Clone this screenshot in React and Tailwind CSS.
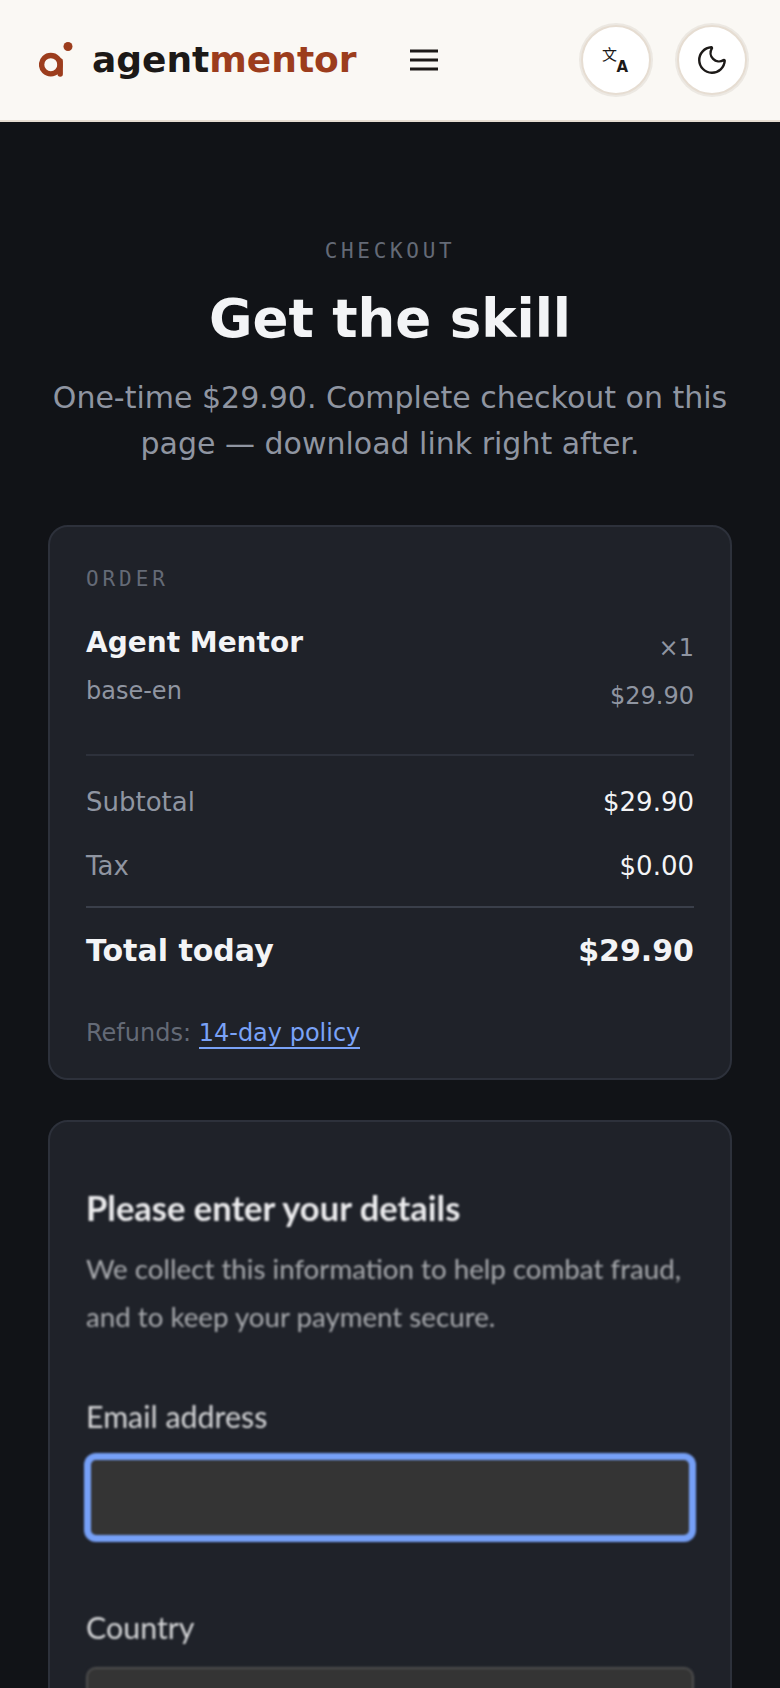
import React from 'react';
import { Moon } from 'lucide-react';

const sans = 'font-["DejaVu_Sans",sans-serif]';

function Logo() {
  return (
    <svg width="34" height="38" viewBox="0 0 34 38" className="shrink-0">
      <circle cx="29" cy="5.5" r="4.5" fill="#9c3d1d" />
      <circle cx="11.8" cy="23.7" r="9.2" fill="none" stroke="#9c3d1d" strokeWidth="5.4" />
      <path d="M21.2 20v13" stroke="#9c3d1d" strokeWidth="5.4" strokeLinecap="round" fill="none" />
    </svg>
  );
}

function Burger() {
  return (
    <svg width="28" height="28" viewBox="0 0 28 28" fill="none" stroke="#1c1917" strokeWidth="3">
      <path d="M0 5h28M0 14h28M0 23h28" />
    </svg>
  );
}

function Header() {
  return (
    <header className="h-[122px] shrink-0 flex items-center bg-[#faf8f4] border-b-2 border-[#e6ddd2] pl-[39px] pr-[33px]">
      <Logo />
      <div className="ml-[19px] text-[36px] leading-none font-bold text-[#1c1917]">
        agent<span className="text-[#9c3d1d]">mentor</span>
      </div>
      <button className="ml-[53px] w-[28px] h-[28px] flex items-center justify-center">
        <Burger />
      </button>
      <div className="ml-auto flex gap-[26px]">
        <button className="w-[70px] h-[70px] rounded-full bg-white border-2 border-[#e6ddd2] shadow-[0_0_0_2px_rgba(230,225,218,0.7)] flex items-center justify-center text-[#1c1917]">
          <span className="relative w-[28px] h-[28px] block">
            <span className='absolute left-0 top-0 text-[15px] leading-none font-["Noto_Sans_CJK_SC",sans-serif]'>文</span>
            <span className="absolute right-[2px] bottom-[-1px] text-[15px] leading-none font-bold">A</span>
          </span>
        </button>
        <button className="w-[70px] h-[70px] rounded-full bg-white border-2 border-[#e6ddd2] shadow-[0_0_0_2px_rgba(230,225,218,0.7)] flex items-center justify-center text-[#1c1917]">
          <Moon size={34} strokeWidth={1.7} />
        </button>
      </div>
    </header>
  );
}

function OrderCard() {
  return (
    <section className="mt-[58px] mx-[48px] h-[555px] rounded-[20px] bg-[#1f2229] border-2 border-[#2d313b] px-[36px] pt-[40px]">
      <div className='font-["DejaVu_Sans_Mono",monospace] text-[21px] leading-[24px] tracking-[3.9px] text-[#646a76]'>ORDER</div>
      <div className="mt-[32px] flex justify-between">
        <div>
          <div className="text-[28px] leading-[40px] font-bold text-[#f3f4f6]">Agent Mentor</div>
          <div className="mt-[8px] text-[24px] leading-[40px] text-[#8f95a1]">base-en</div>
        </div>
        <div className="text-right pt-[5px]">
          <div className="text-[24px] leading-[40px] text-[#8f95a1]">×1</div>
          <div className="mt-[8px] text-[24px] leading-[40px] text-[#8f95a1]">$29.90</div>
        </div>
      </div>
      <div className="mt-[38px] border-t-2 border-[#2d313b]" />
      <div className="mt-[27px] flex justify-between text-[26px] leading-[38px]">
        <span className="text-[#8f95a1]">Subtotal</span>
        <span className="text-[#f3f4f6]">$29.90</span>
      </div>
      <div className="mt-[26px] flex justify-between text-[26px] leading-[38px]">
        <span className="text-[#8f95a1]">Tax</span>
        <span className="text-[#f3f4f6]">$0.00</span>
      </div>
      <div className="mt-[21px] border-t-2 border-[#3a3f4a]" />
      <div className="mt-[21px] flex justify-between text-[30px] leading-[44px] font-bold text-[#f3f4f6]">
        <span>Total today</span>
        <span>$29.90</span>
      </div>
      <div className="mt-[42px] text-[24px] leading-[36px] text-[#646a76]">
        Refunds: <a className="text-[#7aa2f7] border-b-2 border-[#7aa2f7]">14-day policy</a>
      </div>
    </section>
  );
}

function PaymentCard() {
  return (
    <section className="mt-[40px] mx-[48px] h-[640px] rounded-[20px] bg-[#1f2229] border-2 border-[#2d313b] px-[36px] pt-[64px] font-['Lato',sans-serif]">
      <div className="blur-[0.8px]">
        <h2 className="text-[34.5px] leading-[44px] font-bold text-[#ececee]">Please enter your details</h2>
        <p className="mt-[15px] text-[27.7px] leading-[48px] text-[#a8aaae]">We collect this information to help combat fraud, and to keep your payment secure.</p>
        <label className="block mt-[55px] text-[30.4px] leading-[40px] text-[#d6d7d9]">Email address</label>
        <div className="mt-[19px] h-[85px] rounded-[10px] bg-[#343434] border-[5px] border-[#76a0f7] shadow-[0_0_0_2px_#76a0f7]" />
        <label className="block mt-[67px] text-[30.4px] leading-[40px] text-[#d6d7d9]">Country</label>
        <div className="mt-[20px] h-[86px] rounded-[10px] bg-[#343434] border-2 border-[#4f4f4f]" />
      </div>
    </section>
  );
}

export default function App() {
  return (
    <div className={'h-[1688px] overflow-hidden flex flex-col bg-[#111317] ' + sans}>
      <Header />
      <main className="flex-1">
        <div className="pt-[115px] text-center">
          <div className='font-["DejaVu_Sans_Mono",monospace] text-[21px] leading-[28px] tracking-[3.7px] text-[#646a76]'>CHECKOUT</div>
          <h1 className="mt-[19px] text-[53px] leading-[70px] font-bold text-[#f3f4f6]">Get the skill</h1>
          <p className="mt-[21px] px-[48px] text-[30px] leading-[46px] text-[#8f95a1]">One-time $29.90. Complete checkout on this page — download link right after.</p>
        </div>
        <OrderCard />
        <PaymentCard />
      </main>
    </div>
  );
}
